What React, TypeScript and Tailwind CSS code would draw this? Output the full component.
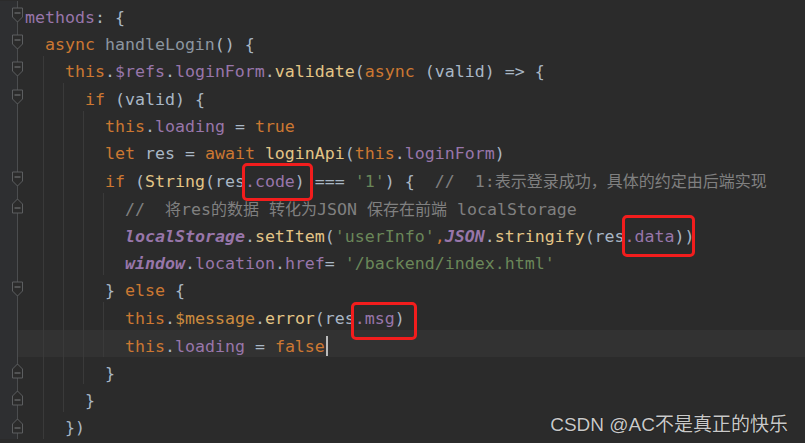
import React from "react";

type Tok = [string, string];

const K = "text-[#cc7832]";
const P = "text-[#9876aa]";
const PI = "text-[#9876aa] italic font-bold";
const D = "text-[#a9b7c6]";
const S = "text-[#6a8759]";
const C = "text-[#808080]";
const F = "text-[#e3c587]";
const G = "text-[#8c96a0]";
const M = "text-[#cc8b3f]";

type Line = {
  indent: number;
  guides: number[];
  fold?: "open" | "close";
  current?: boolean;
  caret?: boolean;
  toks: Tok[];
};

const lines: Line[] = [
  { indent: 0, guides: [], fold: "open", toks: [["methods", P], [": {", D]] },
  { indent: 1, guides: [], fold: "open", toks: [["async ", K], ["handleLogin", G], ["() {", D]] },
  {
    indent: 2,
    guides: [1],
    fold: "open",
    toks: [["this", K], [".", D], ["$refs", P], [".", D], ["loginForm", P], [".", D], ["validate", F], ["(", D], ["async ", K], ["(valid) => {", D]],
  },
  { indent: 3, guides: [1, 2], fold: "open", toks: [["if ", K], ["(valid) {", D]] },
  { indent: 4, guides: [1, 2, 3], toks: [["this", K], [".", D], ["loading", P], [" = ", D], ["true", K]] },
  {
    indent: 4,
    guides: [1, 2, 3],
    toks: [["let ", K], ["res = ", D], ["await ", K], ["loginApi", F], ["(", D], ["this", K], [".", D], ["loginForm", P], [")", D]],
  },
  {
    indent: 4,
    guides: [1, 2, 3],
    fold: "open",
    toks: [["if ", K], ["(", D], ["String", F], ["(res", D], [".code", P], [") === ", D], ["'1'", S], [") {  ", D], ["//  1:表示登录成功，具体的约定由后端实现", C]],
  },
  { indent: 5, guides: [1, 2, 3, 4], fold: "close", toks: [["//  将res的数据 转化为JSON 保存在前端 localStorage", C]] },
  {
    indent: 5,
    guides: [1, 2, 3, 4],
    toks: [["localStorage", PI], [".", D], ["setItem", F], ["(", D], ["'userInfo'", S], [",", K], ["JSON", PI], [".", D], ["stringify", F], ["(res", D], [".data", P], ["))", D]],
  },
  {
    indent: 5,
    guides: [1, 2, 3, 4],
    toks: [["window", PI], [".", D], ["location", P], [".", D], ["href", P], ["= ", D], ["'/backend/index.html'", S]],
  },
  { indent: 4, guides: [1, 2, 3], fold: "open", toks: [["} ", D], ["else ", K], ["{", D]] },
  {
    indent: 5,
    guides: [1, 2, 3, 4],
    toks: [["this", K], [".", D], ["$message", M], [".", D], ["error", F], ["(res", D], [".msg", P], [")", D]],
  },
  { indent: 5, guides: [1, 2, 3, 4], current: true, caret: true, toks: [["this", K], [".", D], ["loading", P], [" = ", D], ["false", K]] },
  { indent: 4, guides: [1, 2, 3], fold: "close", toks: [["}", D]] },
  { indent: 3, guides: [1, 2], fold: "close", toks: [["}", D]] },
  { indent: 2, guides: [1], fold: "close", toks: [["})", D]] },
];

function renderText(text: string) {
  const parts = text.split(/([\u3000-\u9fff\uff00-\uffef]+)/);
  return parts.map((p, i) =>
    /[\u3000-\u9fff\uff00-\uffef]/.test(p) ? (
      <span key={i} className="font-['Noto_Sans_CJK_SC',sans-serif] text-[16px]">
        {p}
      </span>
    ) : (
      <React.Fragment key={i}>{p}</React.Fragment>
    )
  );
}

function FoldMarker({ kind }: { kind: "open" | "close" }) {
  return (
    <svg width="13" height="17" viewBox="0 0 13 17" className="absolute left-[11px] top-1/2 -translate-y-1/2">
      {kind === "open" ? (
        <>
          <path d="M1.5 1.5 H11.5 V10.5 L6.5 15.5 L1.5 10.5 Z" fill="#2b2b2b" stroke="#5c5e60" strokeWidth="1" />
          <path d="M3.5 6.5 H9.5" stroke="#7a7c7e" strokeWidth="1" />
        </>
      ) : (
        <>
          <path d="M1.5 15.5 H11.5 V6.5 L6.5 1.5 L1.5 6.5 Z" fill="#2b2b2b" stroke="#5c5e60" strokeWidth="1" />
          <path d="M3.5 10.5 H9.5" stroke="#7a7c7e" strokeWidth="1" />
        </>
      )}
    </svg>
  );
}

function CodeLine({ line }: { line: Line }) {
  const units = Array.from({ length: line.indent }, (_, i) => i + 1);
  const hl = line.current ? "bg-[#323232]" : "";
  return (
    <div className="flex h-[27.4px] items-stretch">
      <div className="relative flex w-[25px] flex-none">
        <div className="w-[17px] bg-[#2e2f31]" />
        <div className="w-px bg-[#4b4d4f]" />
        <div className={`flex-1 ${hl}`} />
        {line.fold && <FoldMarker kind={line.fold} />}
      </div>
      <div className={`flex flex-1 items-center ${hl}`}>
        {units.map((u) => (
          <div key={u} className="flex h-full w-[20px] flex-none">
            <div className="w-[18px]" />
            {line.guides.includes(u) && u < line.indent + 1 && line.guides.includes(u) ? (
              <div className="h-full w-px bg-[#3a3a3a]" />
            ) : null}
          </div>
        ))}
        <span className="whitespace-pre pt-[5px]">
          {line.toks.map(([t, c], i) => (
            <span key={i} className={c}>
              {renderText(t)}
            </span>
          ))}
          {line.caret && <span className="ml-px inline-block h-[20px] w-[2px] translate-y-[4px] bg-[#bbbbbb] align-baseline" />}
        </span>
      </div>
    </div>
  );
}

export default function App() {
  return (
    <div className="relative h-[443px] w-[805px] overflow-hidden bg-[#2b2b2b] font-['DejaVu_Sans_Mono','Noto_Sans_CJK_SC',monospace] text-[16.6px] leading-[27.4px]">
      <div className="flex flex-col pt-[1px]">
        {lines.map((l, i) => (
          <CodeLine key={i} line={l} />
        ))}
      </div>

      <div className="absolute left-[242px] top-[163px] h-[38px] w-[71px] rounded-[5px] border-[3px] border-[#f21d1d]" />
      <div className="absolute left-[622px] top-[215px] h-[42px] w-[73px] rounded-[5px] border-[3px] border-[#f21d1d]" />
      <div className="absolute left-[351px] top-[302px] h-[38px] w-[66px] rounded-[5px] border-[3px] border-[#f21d1d]" />

      <div className="absolute bottom-[6px] right-[17px] font-['Liberation_Sans','Noto_Sans_CJK_SC',sans-serif] text-[19px] leading-[24px] text-[#c9c9c9] [text-shadow:0_0_1px_#000]">
        CSDN @AC不是真正的快乐
      </div>
    </div>
  );
}
